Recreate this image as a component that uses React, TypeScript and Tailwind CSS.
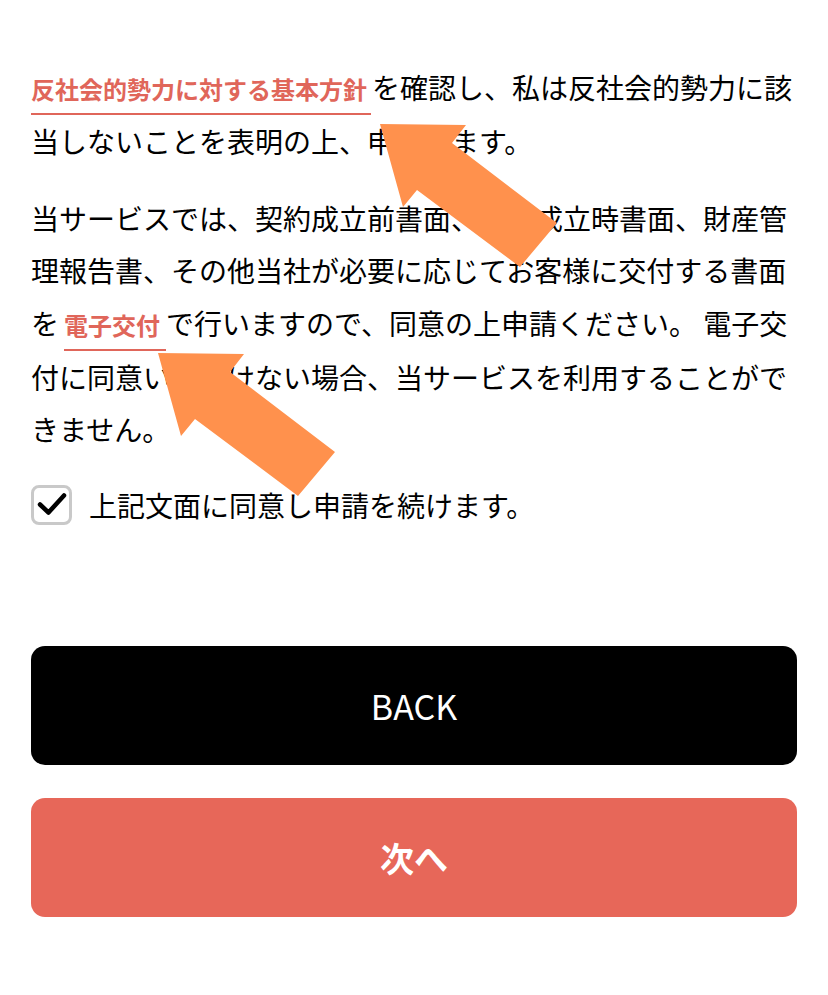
import React from "react";

const Link = ({ children, className = "" }: { children: React.ReactNode; className?: string }) => (
  <span className={"inline-block text-[24px] font-bold leading-[48px] text-[#e0665a] border-b-2 border-[#e0665a] " + className}>
    {children}
  </span>
);

export default function App() {
  return (
    <div className="relative w-full min-h-[995px] bg-white font-['Noto_Sans_CJK_JP','Noto_Sans_CJK_SC',sans-serif] text-black">
      <div className="px-[31px] pt-[61px] pb-[78px]">
        <p className="text-[28px] leading-[52.5px]">
          <Link className="pr-[4px] mr-[1px]">反社会的勢力に対する基本方針</Link>を確認し、私は反社会的勢力に該当しないことを表明の上、申請します。
        </p>
        <p className="mt-[24px] text-[28px] leading-[52.5px]">
          当サービスでは、契約成立前書面、契約成立時書面、財産管理報告書、その他当社が必要に応じてお客様に交付する書面を<Link className="pr-[6px] ml-[5px]">電子交付</Link>で行いますので、同意の上申請ください。 電子交付に同意いただけない場合、当サービスを利用することができません。
        </p>
        <label className="mt-[29px] flex items-center gap-[17px]">
          <span className="flex h-[40px] w-[41px] items-center justify-center rounded-[8px] border-[3px] border-[#c9c9c9] bg-white">
            <svg width="30" height="26" viewBox="0 0 30 26" fill="none">
              <path d="M3 12.5 L11.5 20.5 L27 3.5" stroke="#000" strokeWidth="4.5" strokeLinecap="round" strokeLinejoin="round" />
            </svg>
          </span>
          <span className="text-[28px] leading-[40px]">上記文面に同意し申請を続けます。</span>
        </label>
        <div className="mt-[121px] flex flex-col gap-[33px]">
          <button className="flex h-[119px] w-full items-center justify-center rounded-[14px] bg-black text-[34px] text-white">
            BACK
          </button>
          <button className="flex h-[119px] w-full items-center justify-center rounded-[14px] bg-[#e76759] text-[34px] font-bold text-white">
            次へ
          </button>
        </div>
      </div>
      <svg className="pointer-events-none absolute left-0 top-0" width="828" height="995" viewBox="0 0 828 995">
        <polygon points="380,124 466,125 452,143 557,223 520,267 417,190 403,207" fill="#ff914d" />
        <polygon points="158,353 244,354 230,372 335,452 298,496 195,419 181,436" fill="#ff914d" />
      </svg>
    </div>
  );
}
